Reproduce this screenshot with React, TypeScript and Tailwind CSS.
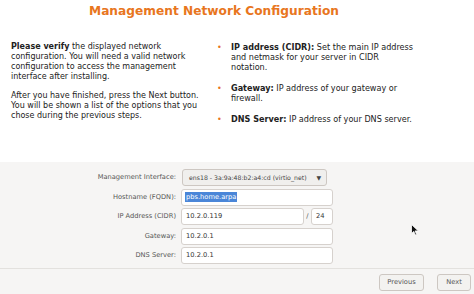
export default function App() {
  const font = { fontFamily: '"DejaVu Sans", Verdana, sans-serif' };
  return (
    <div className="relative w-[474px] h-[294px] bg-white flex flex-col text-[#333]" style={font}>
      {/* Header + help text */}
      <div className="h-[162px] shrink-0">
        <h1 className="pt-[4px] pr-[46px] text-center text-[12.2px] leading-[15px] font-bold text-[#e8761e]">
          Management Network Configuration
        </h1>
        <div className="flex pt-[23px]">
          <div className="w-[206px] pl-[11px] pr-[2px] text-[8px] leading-[10px] text-[#222]">
            <p>
              <b>Please verify</b> the displayed network configuration. You will need a valid network
              configuration to access the management interface after installing.
            </p>
            <p className="mt-[9px]">
              After you have finished, press the Next button. You will be shown a list of the options
              that you chose during the previous steps.
            </p>
          </div>
          <ul className="ml-[11px] flex flex-col gap-[11px] text-[8.1px] leading-[10px] text-[#222]">
            {[
              ["IP address (CIDR):", "Set the main IP address and netmask for your server in CIDR notation."],
              ["Gateway:", "IP address of your gateway or firewall."],
              ["DNS Server:", "IP address of your DNS server."],
            ].map(([k, v]) => (
              <li key={k} className="flex">
                <span className="w-[14px] shrink-0 text-[#e8761e]">•</span>
                <span className="w-[184px]">
                  <b>{k}</b> {v}
                </span>
              </li>
            ))}
          </ul>
        </div>
      </div>

      {/* Form panel */}
      <div className="flex-1 bg-[#f6f5f4] flex flex-col">
        <div className="pt-[7px] flex flex-col gap-[2.5px] text-[6.7px]">
          <Row label="Management Interface:">
            <button className="w-[145px] h-[17px] ml-[1px] flex items-center justify-between whitespace-nowrap pl-[6px] pr-[5px] rounded-[3px] border border-[#cdc7c2] bg-[#f0efed] text-[#444] text-[6.2px]">
              <span>ens18 - 3a:9a:48:b2:a4:cd (virtio_net)</span>
              <span className="text-[6px]">▼</span>
            </button>
          </Row>
          <Row label="Hostname (FQDN):">
            <Field w="w-[152px]">
              <span className="bg-[#4a86d8] text-white px-[1px] -ml-[1px]">pbs.home.arpa</span>
            </Field>
          </Row>
          <Row label="IP Address (CIDR)">
            <div className="flex items-center">
              <Field w="w-[123px]">10.2.0.119</Field>
              <span className="w-[7px] text-center text-[#555]">/</span>
              <Field w="w-[22px]">24</Field>
            </div>
          </Row>
          <Row label="Gateway:">
            <Field w="w-[152px]">10.2.0.1</Field>
          </Row>
          <Row label="DNS Server:">
            <Field w="w-[152px]">10.2.0.1</Field>
          </Row>
        </div>

        <div className="mt-[4px] border-t border-[#e3e1de] flex justify-end gap-[13px] pt-[5px] pr-[3px] text-[6.7px]">
          <button className="w-[45px] h-[17px] rounded-[3px] border border-[#cdc7c2] bg-[#f3f2f0] text-[#555]">
            Previous
          </button>
          <button className="w-[34px] h-[17px] rounded-[3px] border border-[#cdc7c2] bg-[#f3f2f0] text-[#555]">
            Next
          </button>
        </div>
      </div>

      {/* mouse pointer */}
      <svg className="absolute left-[411px] top-[224px]" width="8" height="12" viewBox="0 0 8 12">
        <path d="M0.5 0.5 L0.5 9.5 L2.8 7.4 L4.3 11 L5.6 10.4 L4.1 6.9 L7.3 6.9 Z" fill="#111" stroke="#fff" strokeWidth="0.8" />
      </svg>
    </div>
  );
}

function Row({ label, children }: { label: string; children: React.ReactNode }) {
  return (
    <div className="flex items-center h-[17px]">
      <div className="w-[177px] pr-[1px] text-right text-[#555]">{label}</div>
      <div className="pl-[4px]">{children}</div>
    </div>
  );
}

function Field({ w, children }: { w: string; children: React.ReactNode }) {
  return (
    <div className={`${w} h-[17px] flex items-center px-[4px] rounded-[3px] border border-[#d6d1cd] bg-white text-[#333]`}>
      {children}
    </div>
  );
}
